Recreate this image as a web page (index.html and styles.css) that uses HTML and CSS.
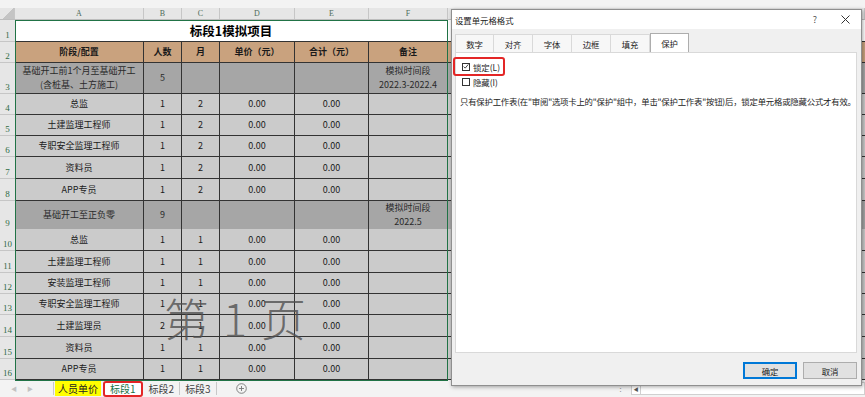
FILE: index.html
```html
<!DOCTYPE html>
<html>
<head>
  <meta charset="UTF-8">
  <title>标段1模拟项目</title>
  <link rel="stylesheet" href="styles.css">
</head>
<body>
  <div class="window">

    <!-- Sheet area -->
    <div class="sheet">
      <div class="topstrip"></div>

      <div class="row colhead">
        <div class="corner"></div>
        <div class="ch">A</div><div class="ch">B</div><div class="ch">C</div>
        <div class="ch">D</div><div class="ch">E</div><div class="ch">F</div><div class="ch">G</div>
      </div>

      <div class="row h22 title-row">
        <div class="rh">1</div>
        <div class="c title">标段1模拟项目</div>
        <div class="c fill"></div>
      </div>

      <div class="row h21 tan">
        <div class="rh">2</div>
        <div class="c b">阶段/配置</div><div class="c b">人数</div><div class="c b">月</div>
        <div class="c b">单价（元）</div><div class="c b">合计（元）</div><div class="c b">备注</div><div class="c fill"></div>
      </div>

      <div class="row h31 dark">
        <div class="rh">3</div>
        <div class="c">基础开工前1个月至基础开工<br>(含桩基、土方施工)</div><div class="c">5</div><div class="c"></div>
        <div class="c"></div><div class="c"></div><div class="c">模拟时间段<br>2022.3-2022.4</div><div class="c fill"></div>
      </div>

      <div class="row h21">
        <div class="rh">4</div>
        <div class="c">总监</div><div class="c">1</div><div class="c">2</div>
        <div class="c">0.00</div><div class="c">0.00</div><div class="c"></div><div class="c fill"></div>
      </div>
      <div class="row h21">
        <div class="rh">5</div>
        <div class="c">土建监理工程师</div><div class="c">1</div><div class="c">2</div>
        <div class="c">0.00</div><div class="c">0.00</div><div class="c"></div><div class="c fill"></div>
      </div>
      <div class="row h21">
        <div class="rh">6</div>
        <div class="c">专职安全监理工程师</div><div class="c">1</div><div class="c">2</div>
        <div class="c">0.00</div><div class="c">0.00</div><div class="c"></div><div class="c fill"></div>
      </div>
      <div class="row h22">
        <div class="rh">7</div>
        <div class="c">资料员</div><div class="c">1</div><div class="c">2</div>
        <div class="c">0.00</div><div class="c">0.00</div><div class="c"></div><div class="c fill"></div>
      </div>
      <div class="row h22">
        <div class="rh">8</div>
        <div class="c">APP专员</div><div class="c">1</div><div class="c">2</div>
        <div class="c">0.00</div><div class="c">0.00</div><div class="c"></div><div class="c fill"></div>
      </div>

      <div class="row h28 dark">
        <div class="rh">9</div>
        <div class="c">基础开工至正负零</div><div class="c">9</div><div class="c"></div>
        <div class="c"></div><div class="c"></div><div class="c">模拟时间段<br>2022.5</div><div class="c fill"></div>
      </div>

      <div class="row h22">
        <div class="rh">10</div>
        <div class="c">总监</div><div class="c">1</div><div class="c">1</div>
        <div class="c">0.00</div><div class="c">0.00</div><div class="c"></div><div class="c fill"></div>
      </div>
      <div class="row h22">
        <div class="rh">11</div>
        <div class="c">土建监理工程师</div><div class="c">1</div><div class="c">1</div>
        <div class="c">0.00</div><div class="c">0.00</div><div class="c"></div><div class="c fill"></div>
      </div>
      <div class="row h21">
        <div class="rh">12</div>
        <div class="c">安装监理工程师</div><div class="c">1</div><div class="c">1</div>
        <div class="c">0.00</div><div class="c">0.00</div><div class="c"></div><div class="c fill"></div>
      </div>
      <div class="row h21">
        <div class="rh">13</div>
        <div class="c">专职安全监理工程师</div><div class="c">1</div><div class="c">1</div>
        <div class="c">0.00</div><div class="c">0.00</div><div class="c"></div><div class="c fill"></div>
      </div>
      <div class="row h22">
        <div class="rh">14</div>
        <div class="c">土建监理员</div><div class="c">2</div><div class="c">1</div>
        <div class="c">0.00</div><div class="c">0.00</div><div class="c"></div><div class="c fill"></div>
      </div>
      <div class="row h22">
        <div class="rh">15</div>
        <div class="c">资料员</div><div class="c">1</div><div class="c">1</div>
        <div class="c">0.00</div><div class="c">0.00</div><div class="c"></div><div class="c fill"></div>
      </div>
      <div class="row h21">
        <div class="rh">16</div>
        <div class="c">APP专员</div><div class="c">1</div><div class="c">1</div>
        <div class="c">0.00</div><div class="c">0.00</div><div class="c"></div><div class="c fill"></div>
      </div>

      <!-- selection outline + page-break watermark -->
      <div class="selection"></div>
      <div class="watermark">第 1 页</div>
    </div>

    <!-- Sheet tabs -->
    <div class="tabbar">
      <span class="nav">&#9664;</span>
      <span class="nav">&#9654;</span>
      <span class="sep"></span>
      <span class="stab yellow">人员单价</span>
      <span class="stab active">标段1</span>
      <span class="stab">标段2</span>
      <span class="sep"></span>
      <span class="stab">标段3</span>
      <span class="sep"></span>
      <span class="add">
        <svg width="11" height="11" viewBox="0 0 11 11"><circle cx="5.5" cy="5.5" r="4.8" fill="none" stroke="#777" stroke-width="0.9"/><path d="M5.5 3v5M3 5.5h5" stroke="#777" stroke-width="0.9"/></svg>
      </span>
      <span class="spacer"></span>
      <span class="grip">&#8942;</span>
      <span class="hscroll"><span class="arr">&#9664;</span></span>
    </div>

    <!-- Format Cells dialog -->
    <div class="dialog">
      <div class="dtitle">
        <span class="dname">设置单元格格式</span>
        <span class="dbtn">?</span>
        <span class="dbtn close">
          <svg width="9" height="9" viewBox="0 0 9 9"><path d="M0.5 0.5l8 8M8.5 0.5l-8 8" stroke="#333" stroke-width="1"/></svg>
        </span>
      </div>
      <div class="dbody">
        <div class="tabs">
          <span class="tab">数字</span>
          <span class="tab">对齐</span>
          <span class="tab">字体</span>
          <span class="tab">边框</span>
          <span class="tab">填充</span>
          <span class="tab current">保护</span>
        </div>
        <div class="panel">
          <div class="check">
            <span class="box">
              <svg width="7" height="7" viewBox="0 0 7 7"><path d="M0.8 3.6l1.8 1.8 3.6-4.4" fill="none" stroke="#222" stroke-width="1"/></svg>
            </span>
            <span>锁定(L)</span>
          </div>
          <div class="check">
            <span class="box"></span>
            <span>隐藏(I)</span>
          </div>
          <p class="note">只有保护工作表(在"审阅"选项卡上的"保护"组中，单击"保护工作表"按钮)后，锁定单元格或隐藏公式才有效。</p>
          <div class="mark"></div>
        </div>
        <div class="buttons">
          <span class="btn primary">确定</span>
          <span class="btn">取消</span>
        </div>
      </div>
    </div>

  </div>
</body>
</html>
```

FILE: styles.css
```css
/* Excel sheet with the Format Cells dialog on top */
body {
  margin: 0;
  font-family: "Noto Sans CJK SC", "Liberation Sans", sans-serif;
  background-color: #f0f0f0;
}
.window {
  position: relative;
  width: 865px;
  height: 397px;
  overflow: hidden;
}

/* sheet grid */
.sheet {
  position: relative;
  display: flex;
  flex-direction: column;
}
.topstrip {
  height: 8px;
  background-color: #f3f3f3;
}
.row {
  display: grid;
  grid-template-columns: 15px 129px 38px 38px 75px 74px 79px 1fr;
  background-color: #cbcbcb;
  font-size: 9px;
  color: #1a1a1a;
}
.h21 { height: 21px; }
.h22 { height: 22px; }
.h28 { height: 28px; }
.h31 { height: 31px; }

.colhead {
  height: 12px;
  background-color: #e6e6e6;
  border-bottom: 1px solid #bdbdbd;
  box-sizing: border-box;
}
.corner {
  border-right: 1px solid #c6c6c6;
  background: linear-gradient(135deg, transparent 55%, #c4c4c4 55%);
}
.ch {
  border-right: 1px solid #c6c6c6;
  color: #4d6b58;
  font-family: "Liberation Serif", serif;
  font-size: 8px;
  line-height: 11px;
  text-align: center;
}

.rh {
  background-color: #e6e6e6;
  border-bottom: 1px solid #c6c6c6;
  color: #2f6b45;
  font-family: "Liberation Serif", serif;
  font-size: 9px;
  display: flex;
  align-items: flex-end;
  justify-content: center;
  padding-bottom: 1px;
  box-sizing: border-box;
}
.c {
  border-right: 1px solid #333;
  border-bottom: 1px solid #333;
  box-sizing: border-box;
  display: flex;
  align-items: center;
  justify-content: center;
  text-align: center;
  line-height: 14px;
  white-space: nowrap;
}
.fill {
  border-right: none;
}
.b {
  font-weight: bold;
}

.title-row {
  background-color: #fff;
}
.title {
  grid-column: 2 / 8;
  font-size: 12.5px;
  font-weight: bold;
  color: #000;
}
.tan {
  background-color: #c9a27e;
}
.dark {
  background-color: #a6a6a6;
  color: #2a2a2a;
}

.selection {
  position: absolute;
  left: 15px;
  top: 20px;
  width: 433px;
  height: 361px;
  border: 1px solid #217346;
  box-sizing: border-box;
  pointer-events: none;
}
.watermark {
  position: absolute;
  left: 164px;
  top: 295px;
  font-size: 45px;
  line-height: 1;
  font-weight: 300;
  letter-spacing: 2px;
  color: rgba(80, 80, 80, 0.8);
  white-space: pre;
}

/* sheet tabs */
.tabbar {
  height: 17px;
  display: flex;
  align-items: center;
  background-color: #f3f3f3;
  font-size: 10px;
  color: #444;
}
.nav {
  width: 16px;
  text-align: center;
  font-size: 6px;
  color: #c2c2c2;
  margin-left: 6px;
}
.nav + .nav {
  margin-left: 0;
  margin-right: 15px;
}
.sep {
  width: 1px;
  height: 13px;
  background-color: #c8c8c8;
}
.stab {
  padding: 0 5px;
  height: 15px;
  line-height: 15px;
}
.yellow {
  background-color: #ffff00;
  color: #222;
  margin-left: 1px;
  padding: 0 3px;
}
.active {
  background-color: #fff;
  color: #217346;
  border: 2px solid #e32626;
  border-radius: 3px;
  height: 12px;
  line-height: 12px;
  padding: 0 5px;
  margin: 0 1px 0 2px;
}
.add {
  margin-left: 19px;
  display: flex;
}
.spacer {
  flex: 1;
}
.grip {
  color: #999;
  font-size: 9px;
  margin-right: 6px;
}
.hscroll {
  width: 232px;
  height: 11px;
  background-color: #fff;
  border: 1px solid #d0d0d0;
  display: flex;
}
.arr {
  width: 8px;
  font-size: 5px;
  color: #555;
  text-align: center;
  line-height: 11px;
  border-right: 1px solid #d0d0d0;
}

/* Format Cells dialog */
.dialog {
  position: absolute;
  left: 451px;
  top: 9px;
  width: 411px;
  height: 377px;
  box-sizing: border-box;
  border: 1px solid #8f8f8f;
  background-color: #f0f0f0;
  box-shadow: 1px 1px 4px rgba(0, 0, 0, 0.35);
  display: flex;
  flex-direction: column;
  font-size: 8.4px;
  color: #222;
}
.dtitle {
  height: 20px;
  background-color: #fff;
  display: flex;
  align-items: center;
  padding: 0 1px 0 3px;
}
.dname {
  flex: 1;
}
.dbtn {
  width: 30px;
  text-align: center;
  color: #555;
  font-size: 9px;
}
.close {
  display: flex;
  justify-content: center;
}
.dbody {
  flex: 1;
  display: flex;
  flex-direction: column;
  padding: 4px 4px 6px 3px;
}
.tabs {
  display: flex;
  height: 19px;
  align-items: flex-end;
}
.tab {
  width: 39px;
  height: 18px;
  box-sizing: border-box;
  border: 1px solid #d9d9d9;
  border-bottom: none;
  border-left: none;
  background-color: #f7f7f7;
  display: flex;
  align-items: center;
  justify-content: center;
}
.tab:first-child {
  border-left: 1px solid #d9d9d9;
}
.tab.current {
  height: 19px;
  background-color: #fff;
  border: 1px solid #adadad;
  border-bottom: none;
}
.panel {
  position: relative;
  height: 301px;
  background-color: #fff;
  border: 1px solid #d9d9d9;
  box-sizing: border-box;
  padding: 6px 4px 0 6px;
}
.check {
  display: flex;
  align-items: center;
  gap: 3px;
  height: 15px;
}
.box {
  width: 6px;
  height: 6px;
  border: 1px solid #333;
  display: flex;
  align-items: center;
  justify-content: center;
}
.note {
  margin: 6px 0 0 -2px;
  white-space: nowrap;
  letter-spacing: -0.2px;
}
.mark {
  position: absolute;
  left: -3px;
  top: 4px;
  width: 52px;
  height: 19px;
  box-sizing: border-box;
  border: 2px solid #e32626;
  border-radius: 3px;
}
.buttons {
  display: flex;
  justify-content: flex-end;
  gap: 6px;
  margin-top: 9px;
}
.btn {
  width: 54px;
  height: 17px;
  box-sizing: border-box;
  background-color: #e1e1e1;
  border: 1px solid #adadad;
  display: flex;
  align-items: center;
  justify-content: center;
}
.primary {
  border: 2px solid #0078d7;
}
```
